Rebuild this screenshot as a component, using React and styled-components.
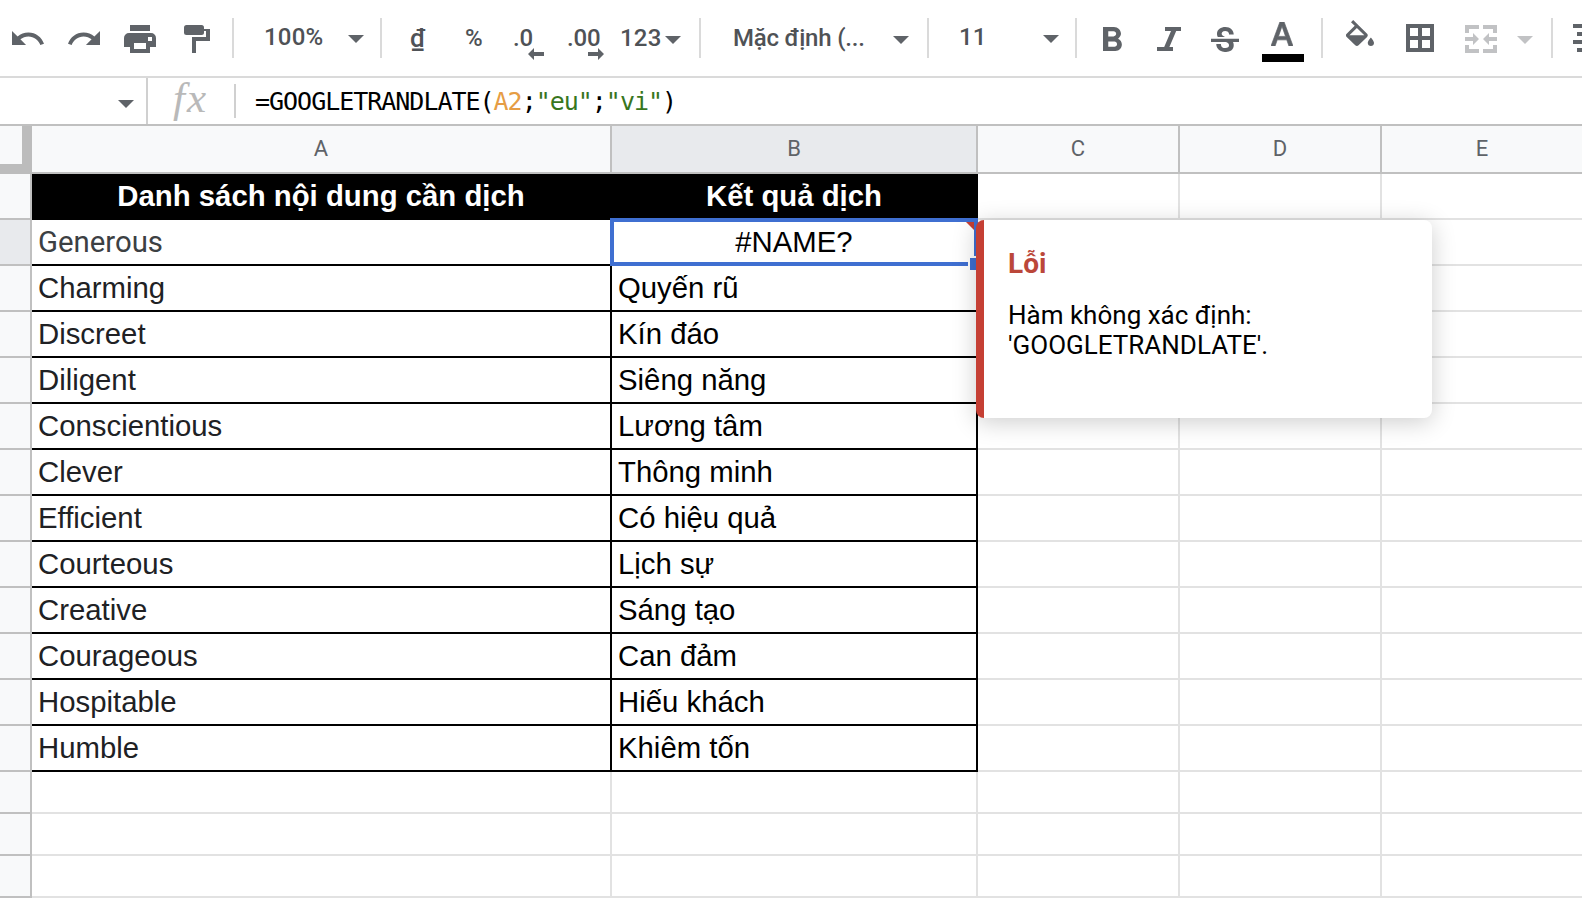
import React from 'react'
import styled, { createGlobalStyle } from 'styled-components'
import {
    MdFormatBold,
    MdStrikethroughS,
    MdFormatColorText,
    MdFormatColorFill,
} from 'react-icons/md'

const ROWS = [
    ['Generous', '#NAME?'],
    ['Charming', 'Quyến rũ'],
    ['Discreet', 'Kín đáo'],
    ['Diligent', 'Siêng năng'],
    ['Conscientious', 'Lương tâm'],
    ['Clever', 'Thông minh'],
    ['Efficient', 'Có hiệu quả'],
    ['Courteous', 'Lịch sự'],
    ['Creative', 'Sáng tạo'],
    ['Courageous', 'Can đảm'],
    ['Hospitable', 'Hiếu khách'],
    ['Humble', 'Khiêm tốn'],
]

const EMPTY_ROWS = [14, 15, 16]

const Caret = ({ ml, mt, color }) => (
    <Item $ml={ml} $mt={mt} $w={16} $h={8} $color={color}>
        <svg viewBox="0 0 16 8">
            <path d="M0 0h16L8 8z" />
        </svg>
    </Item>
)

const Toolbar = () => (
    <Bar>
        <Item $ml={12} $mt={31} $w={32} $h={14}>
            <svg viewBox="2 7 20.47 9" preserveAspectRatio="none">
                <path d="M12.5 8c-2.65 0-5.05.99-6.9 2.6L2 7v9h9l-3.62-3.62c1.39-1.16 3.16-1.88 5.12-1.88 3.54 0 6.55 2.31 7.6 5.5l2.37-.78C21.08 11.03 17.15 8 12.5 8z" />
            </svg>
        </Item>
        <Item $ml={24} $mt={31} $w={32} $h={14}>
            <svg viewBox="1.54 7 20.46 9" preserveAspectRatio="none">
                <path d="M18.4 10.6C16.55 8.99 14.15 8 11.5 8c-4.65 0-8.58 3.03-9.96 7.22L3.9 16c1.05-3.19 4.05-5.5 7.6-5.5 1.95 0 3.73.72 5.12 1.88L13 16h9V7l-3.6 3.6z" />
            </svg>
        </Item>
        <Item $ml={24} $mt={25} $w={32} $h={28}>
            <svg viewBox="0 0 32 28" fillRule="evenodd">
                <path d="M6 0h20v6H6z" />
                <path d="M5 8h22a5 5 0 0 1 5 5v9h-6v6H6v-6H0v-9a5 5 0 0 1 5-5zm5 10v6h12v-6zm14-6v4h4v-4z" />
            </svg>
        </Item>
        <Item $ml={28} $mt={25} $w={26} $h={28}>
            <svg viewBox="0 0 26 28">
                <rect width="20" height="10" rx="2.5" />
                <path d="M19 4h7v12H12v12H8V12h14V6h-3z" />
            </svg>
        </Item>
        <Divider $ml={22} />

        <Label $ml={30} $w={60}>
            100%
        </Label>
        <Caret ml={24} mt={35} />
        <Divider $ml={16} />

        <Label $ml={28} $w={16} $mt={1} $size={26}>
            ₫
        </Label>
        <Label $ml={39} $w={20} $mt={1}>
            %
        </Label>
        <Label $ml={28} $w={32} $mt={1} $tight>
            .0
            <Arrow viewBox="0 0 16 12">
                <path d="M0 6l6-6v4h10v4H6v4z" />
            </Arrow>
        </Label>
        <Label $ml={22} $w={38} $mt={1} $tight>
            .00
            <Arrow viewBox="0 0 16 12">
                <path d="M16 6l-6-6v4H0v4h10v4z" />
            </Arrow>
        </Label>
        <Label $ml={15} $w={42} $mt={1}>
            123
        </Label>
        <Caret ml={3} mt={36} />
        <Divider $ml={18} />

        <Label $ml={32} $w={132} $mt={1} $tight>
            Mặc định (...
        </Label>
        <Caret ml={28} mt={36} />
        <Divider $ml={18} />

        <Label $ml={30} $w={26}>
            11
        </Label>
        <Caret ml={58} mt={35} />
        <Divider $ml={16} />

        <Item $ml={26} $mt={27} $w={19} $h={24}>
            <MdFormatBold viewBox="7 4 10.83 14" preserveAspectRatio="none" />
        </Item>
        <Item $ml={35} $mt={27} $w={24} $h={24}>
            <svg viewBox="0 0 24 24">
                <path d="M8 0h16v4h-4.8l-6.8 16H16v4H0v-4h7.2L14 4H8z" />
            </svg>
        </Item>
        <Item $ml={30} $mt={27} $w={28} $h={25}>
            <MdStrikethroughS viewBox="3 3 18 15" preserveAspectRatio="none" />
        </Item>
        <TextColor>
            <MdFormatColorText
                viewBox="5.49 3 13.02 14"
                preserveAspectRatio="none"
            />
        </TextColor>
        <Divider $ml={17} />

        <Item $ml={23} $mt={20} $w={28} $h={26}>
            <MdFormatColorFill viewBox="3 0 18 17" preserveAspectRatio="none" />
        </Item>
        <Item $ml={32} $mt={24} $w={28} $h={28}>
            <svg viewBox="0 0 28 28" fillRule="evenodd">
                <path d="M0 0h28v28H0zM4 4v8h8V4zm12 0v8h8V4zM4 16v8h8v-8zm12 0v8h8v-8z" />
            </svg>
        </Item>
        <Item $ml={31} $mt={25} $w={32} $h={28} $color="#c1c2c4">
            <svg viewBox="0 0 32 28">
                <path d="M0 0h14v4H4v4H0zM18 0h14v8h-4V4H18zM0 20h4v4h10v4H0zM28 20h4v8H18v-4h10z" />
                <path d="M0 12h8V8l6 6-6 6v-4H0zM32 12h-8V8l-6 6 6 6v-4h8z" />
            </svg>
        </Item>
        <Caret ml={20} mt={36} color="#c1c2c4" />
        <Divider $ml={18} />

        <Item $ml={20} $mt={24} $w={36} $h={28}>
            <svg viewBox="0 0 36 28">
                <path d="M0 0h36v4H0zM4 8h28v4H4zM0 16h36v4H0zM4 24h28v4H4z" />
            </svg>
        </Item>
    </Bar>
)

const FormulaBar = () => (
    <Formula>
        <NameBox>
            <Caret ml={118} mt={22} />
        </NameBox>
        <Fx>fx</Fx>
        <Code>
            =GOOGLETRANDLATE(<Ref>A2</Ref>;<Str>"eu"</Str>;<Str>"vi"</Str>)
        </Code>
    </Formula>
)

const App = () => (
    <Page>
        <GlobalStyle />
        <Toolbar />
        <FormulaBar />

        <ColumnHeads>
            <Corner />
            <Head>A</Head>
            <Head $active>B</Head>
            <Head>C</Head>
            <Head>D</Head>
            <Head>E</Head>
        </ColumnHeads>

        <Row>
            <Gutter />
            <TitleCell>Danh sách nội dung cần dịch</TitleCell>
            <TitleCell>Kết quả dịch</TitleCell>
            <Cell />
            <Cell />
            <Cell />
        </Row>

        {ROWS.map(([word, result], i) => (
            <Row key={word}>
                <Gutter $active={i === 0} />
                {i === 0 ? (
                    <RobotoCell $filled $color="#3c4043">
                        {word}
                    </RobotoCell>
                ) : (
                    <Cell $filled $color="#202124">
                        {word}
                    </Cell>
                )}
                {i === 0 ? (
                    <Cell $filled $center>
                        {result}
                        <ErrorMark />
                        <Selection />
                        <Handle />
                        <Popup>
                            <h4>Lỗi</h4>
                            <p>
                                Hàm không xác định:
                                <br />
                                'GOOGLETRANDLATE'.
                            </p>
                        </Popup>
                    </Cell>
                ) : (
                    <Cell $filled>{result}</Cell>
                )}
                <Cell />
                <Cell />
                <Cell />
            </Row>
        ))}

        {EMPTY_ROWS.map((n) => (
            <Row key={n} $short>
                <Gutter />
                <Cell />
                <Cell />
                <Cell />
                <Cell />
                <Cell />
            </Row>
        ))}
    </Page>
)

const GlobalStyle = createGlobalStyle`
    * {
        box-sizing: border-box;
    }

    body {
        margin: 0;
        background: #fff;
        overflow: hidden;
    }
`

const Page = styled.div`
    width: 1582px;
    height: 898px;
    overflow: hidden;
    font-family: Roboto, sans-serif;
    color: #000;
`

// TOOLBAR
const Bar = styled.div`
    display: flex;
    align-items: flex-start;
    height: 78px;
    border-bottom: 2px solid #dadada;
    overflow: hidden;
`

const Item = styled.div`
    flex: none;
    width: ${(p) => p.$w}px;
    height: ${(p) => p.$h}px;
    margin-left: ${(p) => p.$ml}px;
    margin-top: ${(p) => p.$mt}px;
    color: ${(p) => p.$color || '#5f6368'};

    svg {
        display: block;
        width: 100%;
        height: 100%;
        fill: currentColor;
    }
`

const Divider = styled.div`
    flex: none;
    width: 2px;
    height: 40px;
    margin-top: 18px;
    margin-left: ${(p) => p.$ml}px;
    background: #dadada;
`

const Label = styled.div`
    position: relative;
    flex: none;
    width: ${(p) => p.$w}px;
    height: 40px;
    margin-left: ${(p) => p.$ml}px;
    margin-top: ${(p) => 17 + (p.$mt || 0)}px;
    font-size: ${(p) => p.$size || 24}px;
    font-weight: 500;
    line-height: 40px;
    letter-spacing: ${(p) => (p.$tight ? -0.2 : 0.2)}px;
    white-space: nowrap;
    color: #4f5256;
`

const Arrow = styled.svg`
    position: absolute;
    right: 1px;
    bottom: -2px;
    width: 16px;
    height: 12px;
    fill: #5f6368;
`

const TextColor = styled.div`
    flex: none;
    width: 42px;
    height: 62px;
    margin-left: 23px;
    padding: 22px 9px 0;
    border-bottom: 8px solid #000;
    color: #5f6368;

    svg {
        display: block;
        width: 22px;
        height: 24px;
        stroke: currentColor;
        stroke-width: 0.4px;
    }
`

// FORMULA
const Formula = styled.div`
    display: flex;
    align-items: center;
    height: 48px;
    border-bottom: 2px solid #c0c0c0;
`

const NameBox = styled.div`
    width: 148px;
    height: 46px;
    border-right: 2px solid #d0d0d0;
`

const Fx = styled.div`
    width: 88px;
    height: 34px;
    padding-left: 25px;
    border-right: 2px solid #d0d0d0;
    font: italic 43px/27px 'Liberation Serif', serif;
    letter-spacing: 2px;
    color: #b9b9b9;
`

const Code = styled.div`
    padding: 2px 0 0 19px;
    font-family: 'DejaVu Sans Mono', monospace;
    font-size: 25px;
    letter-spacing: -1.02px;
    line-height: 46px;
    white-space: pre;
`

const Ref = styled.span`
    color: #e69d45;
`

const Str = styled.span`
    color: #38761d;
`

// GRID
const columns = '32px 580px 366px 202px 202px 202px'

const ColumnHeads = styled.div`
    display: grid;
    grid-template-columns: ${columns};
    height: 48px;
`

const Corner = styled.div`
    background: #f8f9fa;
    border: solid #bcbcbc;
    border-width: 0 10px 10px 0;
`

const Head = styled.div`
    border: solid #c0c0c0;
    border-width: 0 2px 2px 0;
    background: ${(p) => (p.$active ? '#e8eaed' : '#f8f9fa')};
    font-size: 22px;
    line-height: 46px;
    text-align: center;
    color: #5f6368;
`

const Row = styled.div`
    display: grid;
    grid-template-columns: ${columns};
    height: ${(p) => (p.$short ? 42 : 46)}px;
`

const Gutter = styled.div`
    border: solid #c0c0c0;
    border-width: 0 2px 2px 0;
    background: ${(p) => (p.$active ? '#e8eaed' : '#f8f9fa')};
`

const Cell = styled.div`
    position: relative;
    padding-left: ${(p) => (p.$center ? 0 : 6)}px;
    border: solid ${(p) => (p.$filled ? '#000' : '#e2e2e2')};
    border-width: 0 2px 2px 0;
    font-family: 'Liberation Sans', Arial, sans-serif;
    font-size: 29.33px;
    line-height: 43px;
    text-align: ${(p) => (p.$center ? 'center' : 'left')};
    white-space: nowrap;
    color: ${(p) => p.$color || '#000'};
`

const RobotoCell = styled(Cell)`
    padding-top: 1px;
    font-family: Roboto, sans-serif;
`

const TitleCell = styled(Cell)`
    padding: 0;
    border-color: #000;
    background: #000;
    font-weight: bold;
    text-align: center;
    color: #fff;
`

const ErrorMark = styled.i`
    position: absolute;
    top: 0;
    right: 0;
    border: 6px solid;
    border-color: #c53f34 #c53f34 transparent transparent;
`

const Selection = styled.div`
    position: absolute;
    inset: -2px -2px -2px -2px;
    border: 4px solid #3f6fd1;
`

const Handle = styled.div`
    position: absolute;
    right: -8px;
    bottom: -8px;
    width: 16px;
    height: 16px;
    border: 2px solid #fff;
    background: #3f6fd1;
`

const Popup = styled.div`
    position: absolute;
    z-index: 2;
    top: 0;
    left: 100%;
    width: 456px;
    height: 198px;
    padding: 29px 24px;
    border-left: 8px solid #c53f34;
    border-radius: 8px;
    background: #fff;
    box-shadow: 0 4px 24px rgba(0, 0, 0, 0.2);
    font-family: Roboto, sans-serif;
    text-align: left;

    h4 {
        margin: 0 0 21px;
        font-size: 28px;
        font-weight: 700;
        line-height: 30px;
        color: #bb473a;
    }

    p {
        margin: 0;
        font-size: 26px;
        line-height: 30px;
    }
`

export default App
